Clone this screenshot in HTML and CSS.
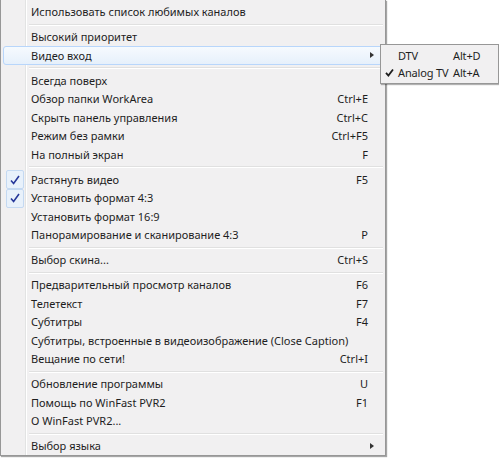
FILE: index.html
```html
<!DOCTYPE html>
<html lang="ru">
<head>
    <meta charset="UTF-8">
    <title>WinFast PVR2 - меню</title>
    <link rel="stylesheet" href="styles.css">
</head>
<body>
    <div class="menu">
        <div class="item"><span class="label">Использовать список любимых каналов</span></div>
        <div class="sep"></div>
        <div class="item"><span class="label">Высокий приоритет</span></div>
        <div class="item active"><span class="label">Видео вход</span><span class="arrow"></span></div>
        <div class="sep"></div>
        <div class="item"><span class="label">Всегда поверх</span></div>
        <div class="item"><span class="label">Обзор папки WorkArea</span><span class="key">Ctrl+E</span></div>
        <div class="item"><span class="label">Скрыть панель управления</span><span class="key">Ctrl+C</span></div>
        <div class="item"><span class="label">Режим без рамки</span><span class="key">Ctrl+F5</span></div>
        <div class="item"><span class="label">На полный экран</span><span class="key">F</span></div>
        <div class="sep"></div>
        <div class="item checked">
            <span class="check"><svg width="12" height="12" viewBox="0 0 12 12"><path d="M2 6.5 L4.6 9.5 L10 2" fill="none" stroke="#26379a" stroke-width="1.6"/></svg></span>
            <span class="label">Растянуть видео</span><span class="key">F5</span>
        </div>
        <div class="item checked">
            <span class="check"><svg width="12" height="12" viewBox="0 0 12 12"><path d="M2 6.5 L4.6 9.5 L10 2" fill="none" stroke="#26379a" stroke-width="1.6"/></svg></span>
            <span class="label">Установить формат 4:3</span>
        </div>
        <div class="item"><span class="label">Установить формат 16:9</span></div>
        <div class="item"><span class="label">Панорамирование и сканирование 4:3</span><span class="key">P</span></div>
        <div class="sep"></div>
        <div class="item"><span class="label">Выбор скина...</span><span class="key">Ctrl+S</span></div>
        <div class="sep"></div>
        <div class="item"><span class="label">Предварительный просмотр каналов</span><span class="key">F6</span></div>
        <div class="item"><span class="label">Телетекст</span><span class="key">F7</span></div>
        <div class="item"><span class="label">Субтитры</span><span class="key">F4</span></div>
        <div class="item"><span class="label">Субтитры, встроенные в видеоизображение (Close Caption)</span></div>
        <div class="item"><span class="label">Вещание по сети!</span><span class="key">Ctrl+I</span></div>
        <div class="sep"></div>
        <div class="item"><span class="label">Обновление программы</span><span class="key">U</span></div>
        <div class="item"><span class="label">Помощь по WinFast PVR2</span><span class="key">F1</span></div>
        <div class="item"><span class="label">О WinFast PVR2...</span></div>
        <div class="sep"></div>
        <div class="item"><span class="label">Выбор языка</span><span class="arrow"></span></div>
    </div>

    <div class="submenu">
        <div class="sub-item"><span class="sub-check"></span><span class="sub-label">DTV</span><span class="sub-key">Alt+D</span></div>
        <div class="sub-item"><span class="sub-check"><svg width="9" height="9" viewBox="0 0 9 9"><path d="M1 4.8 L3.4 7.5 L8 1.5" fill="none" stroke="#1e1e1e" stroke-width="1.8"/></svg></span><span class="sub-label">Analog TV</span><span class="sub-key">Alt+A</span></div>
    </div>
</body>
</html>
```

FILE: styles.css
```css
body {
    margin: 0;
    background-color: #ffffff;
    font-family: 'Noto Sans', 'Open Sans', sans-serif;
    font-size: 11px;
    color: #1e1e1e;
    width: 499px;
    height: 458px;
    overflow: hidden;
    position: relative;
}
.menu {
    position: relative;
    width: 384px;
    height: 452px;
    padding-top: 2.5px;
    background-color: #f1f0f1;
    border: 1px solid #979797;
    border-top: none;
    box-shadow: 1px 1px 1px rgba(0, 0, 0, 0.35);
}
.menu::before {
    content: "";
    position: absolute;
    left: 24px;
    top: 0;
    bottom: 0;
    width: 1px;
    background-color: #e2e3e3;
    border-right: 1px solid #ffffff;
}
.item {
    position: relative;
    display: flex;
    align-items: center;
    height: 18.5px;
    margin: 0 2px;
    padding-left: 27px;
    box-sizing: border-box;
    border: 1px solid transparent;
    border-radius: 3px;
}
.item .label {
    flex: 1;
    white-space: nowrap;
}
.item .key {
    padding-right: 14px;
}
.item .arrow {
    width: 0;
    height: 0;
    margin-right: 8px;
    border-top: 3px solid transparent;
    border-bottom: 3px solid transparent;
    border-left: 4px solid #333333;
}
.item.active {
    border-color: #b8d6fb;
    background: linear-gradient(#f6fafe, #e6f0fb);
}
.check {
    position: absolute;
    left: 2px;
    top: -1px;
    width: 16px;
    height: 17px;
    display: flex;
    align-items: center;
    justify-content: center;
    background-color: #e8f1fb;
    border: 1px solid #c4d9f2;
    border-radius: 2px;
}
.sep {
    height: 1px;
    margin: 2.5px 2px 2px 28px;
    background-color: #e0e0e0;
    border-bottom: 1px solid #ffffff;
}
.submenu {
    position: absolute;
    left: 380px;
    top: 44px;
    width: 117px;
    padding: 2px 0;
    background-color: #f1f0f1;
    border: 1px solid #979797;
    box-shadow: 1px 1px 1px rgba(0, 0, 0, 0.3);
}
.sub-item {
    display: flex;
    align-items: center;
    height: 17px;
    white-space: nowrap;
    letter-spacing: -0.15px;
}
.sub-check {
    display: flex;
    align-items: center;
    width: 13px;
    padding-left: 4px;
}
.sub-label {
    width: 55px;
}
```
